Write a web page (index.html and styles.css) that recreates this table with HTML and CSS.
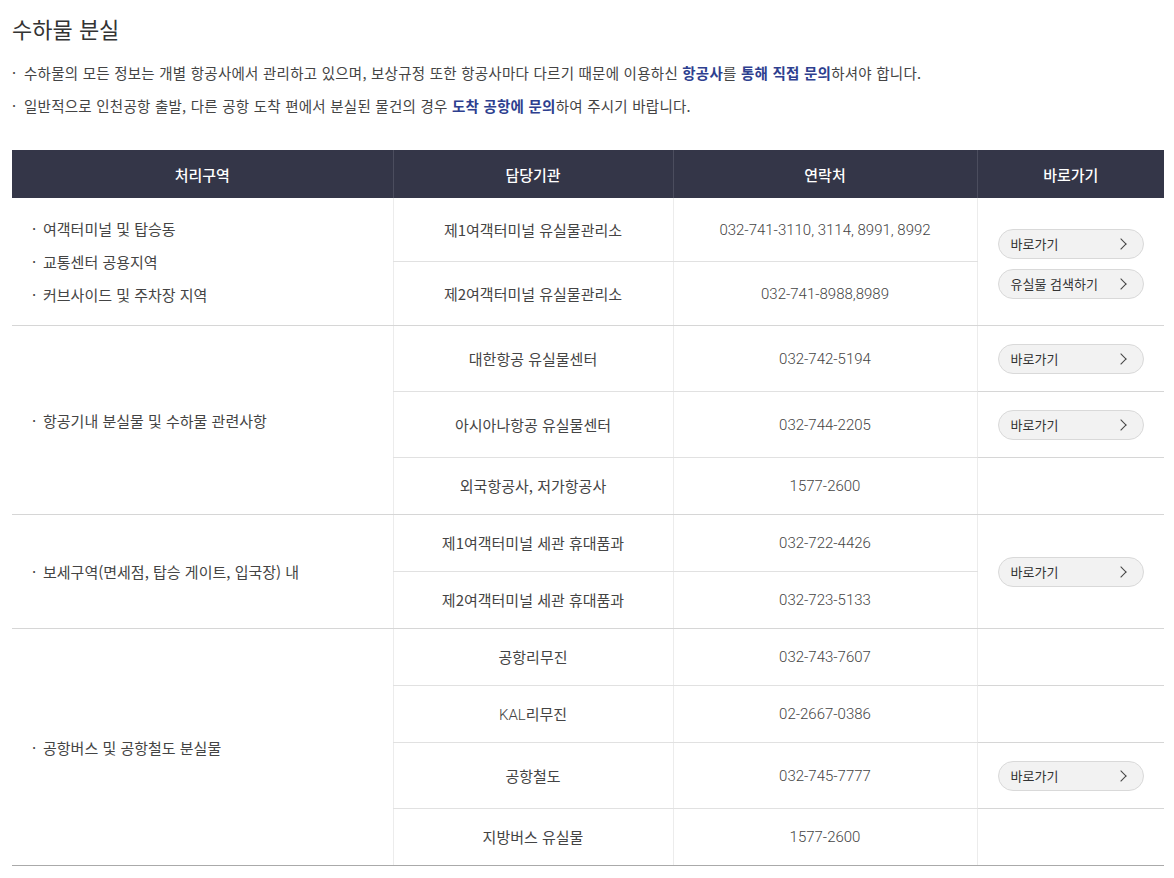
FILE: index.html
```html
<!DOCTYPE html>
<html lang="ko">
<head>
<meta charset="utf-8">
<title>수하물 분실</title>
<link rel="stylesheet" href="styles.css">
</head>
<body>
<div class="page">
  <h2 class="title">수하물 분실</h2>
  <ul class="notes">
    <li>수하물의 모든 정보는 개별 항공사에서 관리하고 있으며, 보상규정 또한 항공사마다 다르기 때문에 이용하신 <strong>항공사</strong>를 <strong>통해 직접 문의</strong>하셔야 합니다.</li>
    <li>일반적으로 인천공항 출발, 다른 공항 도착 편에서 분실된 물건의 경우 <strong>도착 공항에 문의</strong>하여 주시기 바랍니다.</li>
  </ul>
  <table class="lost">
    <colgroup>
      <col class="c1"><col class="c2"><col class="c3"><col class="c4">
    </colgroup>
    <thead>
      <tr><th>처리구역</th><th>담당기관</th><th>연락처</th><th>바로가기</th></tr>
    </thead>
    <tbody>
      <tr class="r63">
        <td rowspan="2" class="area">
          <ul class="alist">
            <li>여객터미널 및 탑승동</li>
            <li>교통센터 공용지역</li>
            <li>커브사이드 및 주차장 지역</li>
          </ul>
        </td>
        <td>제1여객터미널 유실물관리소</td>
        <td class="num">032-741-3110, 3114, 8991, 8992</td>
        <td rowspan="2" class="go">
          <div class="btns">
            <a class="btn" href="#">바로가기<span class="chev"></span></a>
            <a class="btn" href="#">유실물 검색하기<span class="chev"></span></a>
          </div>
        </td>
      </tr>
      <tr class="r63 gend">
        <td>제2여객터미널 유실물관리소</td>
        <td class="num">032-741-8988,8989</td>
      </tr>

      <tr>
        <td rowspan="3" class="area"><ul class="alist"><li>항공기내 분실물 및 수하물 관련사항</li></ul></td>
        <td>대한항공 유실물센터</td>
        <td class="num">032-742-5194</td>
        <td class="go"><a class="btn" href="#">바로가기<span class="chev"></span></a></td>
      </tr>
      <tr>
        <td>아시아나항공 유실물센터</td>
        <td class="num">032-744-2205</td>
        <td class="go"><a class="btn" href="#">바로가기<span class="chev"></span></a></td>
      </tr>
      <tr class="gend">
        <td>외국항공사, 저가항공사</td>
        <td class="num">1577-2600</td>
        <td class="go"></td>
      </tr>

      <tr>
        <td rowspan="2" class="area"><ul class="alist"><li>보세구역(면세점, 탑승 게이트, 입국장) 내</li></ul></td>
        <td>제1여객터미널 세관 휴대품과</td>
        <td class="num">032-722-4426</td>
        <td rowspan="2" class="go"><a class="btn" href="#">바로가기<span class="chev"></span></a></td>
      </tr>
      <tr class="gend">
        <td>제2여객터미널 세관 휴대품과</td>
        <td class="num">032-723-5133</td>
      </tr>

      <tr>
        <td rowspan="4" class="area lastarea"><ul class="alist"><li>공항버스 및 공항철도 분실물</li></ul></td>
        <td>공항리무진</td>
        <td class="num">032-743-7607</td>
        <td class="go"></td>
      </tr>
      <tr>
        <td><span class="lat">KAL</span>리무진</td>
        <td class="num">02-2667-0386</td>
        <td class="go"></td>
      </tr>
      <tr>
        <td>공항철도</td>
        <td class="num">032-745-7777</td>
        <td class="go"><a class="btn" href="#">바로가기<span class="chev"></span></a></td>
      </tr>
      <tr class="last">
        <td>지방버스 유실물</td>
        <td class="num">1577-2600</td>
        <td class="go"></td>
      </tr>
    </tbody>
  </table>
</div>
</body>
</html>
```

FILE: styles.css
```css
html, body {
  margin: 0;
  padding: 0;
  background: #fff;
}
body {
  font-family: "Noto Sans CJK KR", sans-serif;
  color: #333;
  font-size: 15px;
}
.page {
  padding: 12px 10px 0 12px;
}
.title {
  margin: 0;
  font-size: 22px;
  font-weight: 400;
  line-height: 33px;
  color: #333;
}
.notes {
  list-style: none;
  margin: 11px 0 0 0;
  padding: 0;
}
.notes li {
  position: relative;
  padding-left: 12px;
  line-height: 33px;
  font-size: 14.5px;
  color: #444;
  letter-spacing: 0.25px;
}
.notes li::before {
  content: "·";
  position: absolute;
  left: 0;
  top: 0;
}
.notes strong {
  color: #2e3f8f;
  font-weight: 700;
}
.lost {
  width: 1152px;
  margin-top: 28px;
  border-collapse: collapse;
  table-layout: fixed;
}
.c1 { width: 381px; }
.c2 { width: 280px; }
.c3 { width: 304px; }
.c4 { width: 187px; }
.lost th {
  background: #343648;
  color: #fff;
  height: 48px;
  padding: 0;
  font-weight: 500;
  font-size: 15px;
  border-left: 1px solid #4b4d5e;
}
.lost th:first-child { border-left: none; }
.lost td {
  border-bottom: 1px solid #e1e1e1;
  border-left: 1px solid #ececec;
  text-align: center;
  padding: 17px 10px;
  line-height: 22px;
  color: #444;
  font-size: 15px;
  height: 22px;
}
.lost td.num,
.lat {
  font-family: Roboto, "Noto Sans CJK KR", sans-serif;
  font-weight: 300;
  color: #444;
  font-size: 15px;
}
.lat {
  line-height: 1;
}
.lost td.area {
  border-left: none;
  text-align: left;
  padding: 0 10px 0 20px;
  border-bottom: 1px solid #d6d6d6;
}
.lost tr.gend td { border-bottom-color: #d6d6d6; }
.lost td.go { border-bottom-color: #d6d6d6; }
.lost tr.r63 td { height: 29px; }
.lost tr.last td,
.lost td.lastarea { border-bottom: 1px solid #aaa; }
.alist {
  list-style: none;
  margin: 0;
  padding: 0;
}
.alist li {
  position: relative;
  padding-left: 11px;
  line-height: 33px;
  color: #444;
}
.alist li::before {
  content: "·";
  position: absolute;
  left: 0;
  top: 0;
}
.lost td.go {
  padding: 17px 20px;
  text-align: left;
}
.go > .btn {
  margin-top: 1px;
}
.btns {
  display: flex;
  flex-direction: column;
  gap: 10px;
  margin-top: 5px;
}
.btn {
  display: flex;
  align-items: center;
  justify-content: space-between;
  box-sizing: border-box;
  width: 146px;
  height: 30px;
  padding: 0 16px 0 12px;
  border: 1px solid #d9d9d9;
  border-radius: 15px;
  background: #f2f2f2;
  color: #333;
  font-size: 13px;
  text-decoration: none;
}
.chev {
  width: 7px;
  height: 7px;
  border-top: 1.3px solid #444;
  border-right: 1.3px solid #444;
  transform: rotate(45deg);
  margin-right: 2px;
}
```
